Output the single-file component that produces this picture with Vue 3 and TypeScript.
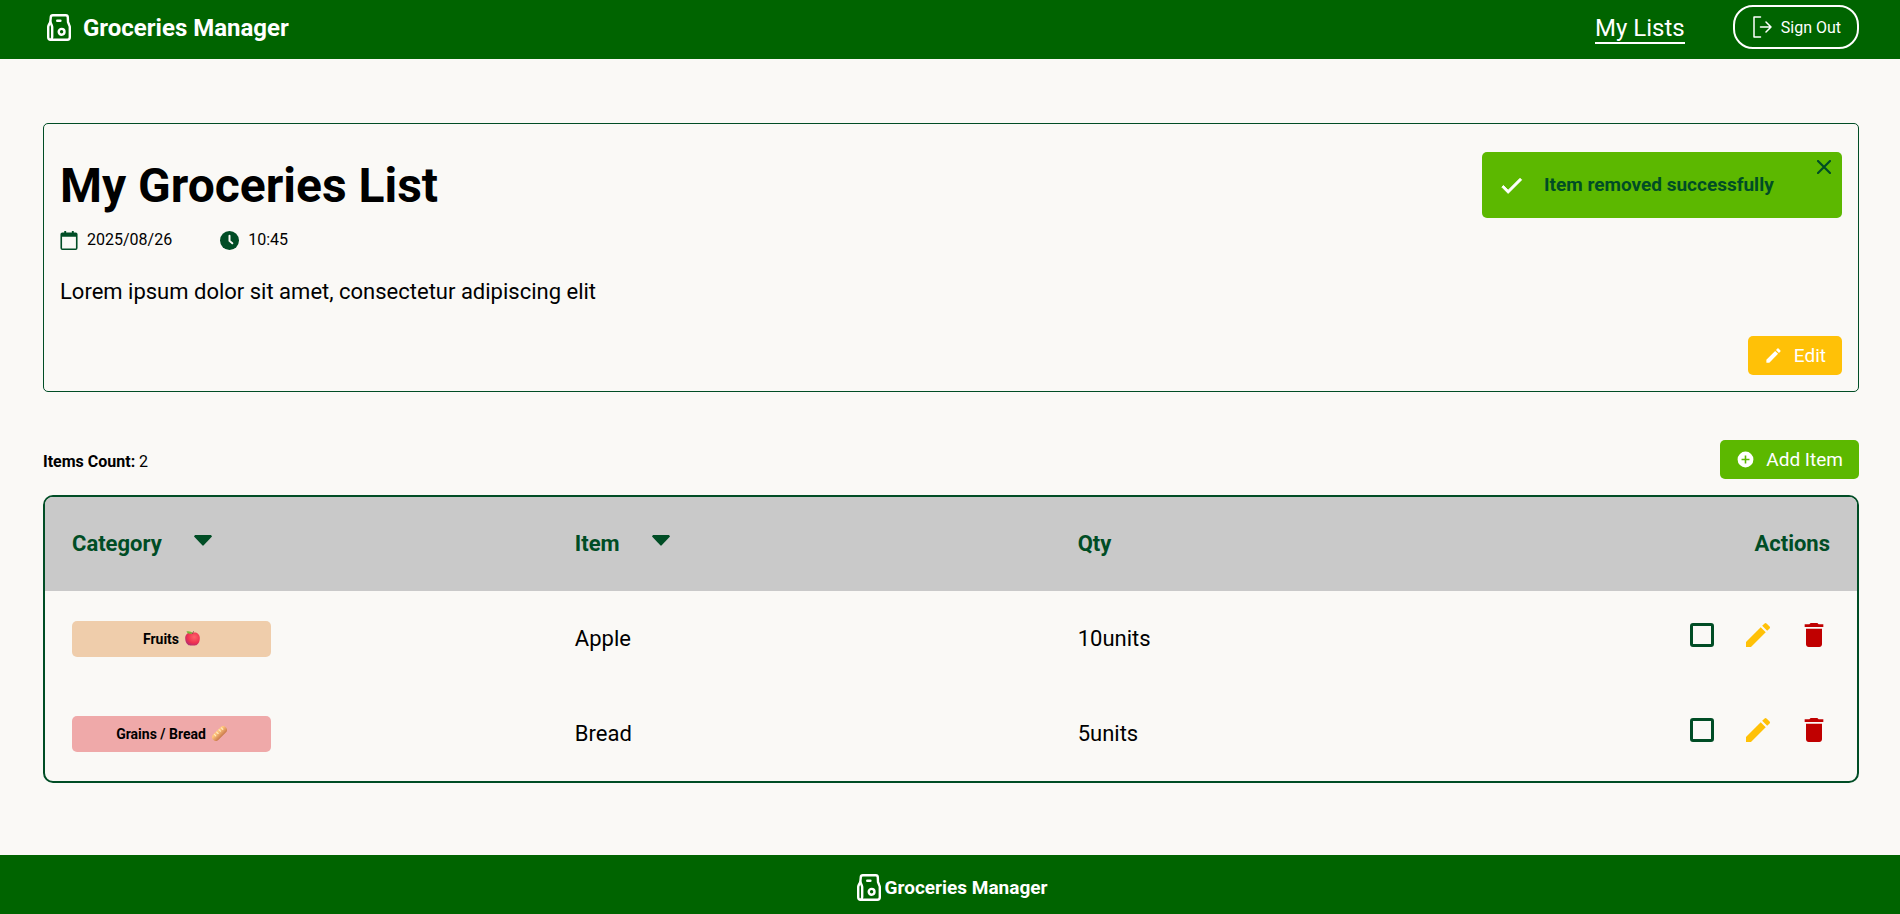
<script setup lang="ts">
import { ref } from 'vue'

interface GroceryItem {
  id: number
  category: string
  kind: 'fruits' | 'grains'
  name: string
  quantity: string
  done: boolean
}

const items = ref<GroceryItem[]>([
  { id: 1, category: 'Fruits', kind: 'fruits', name: 'Apple', quantity: '10units', done: false },
  { id: 2, category: 'Grains / Bread', kind: 'grains', name: 'Bread', quantity: '5units', done: false },
])

const toastVisible = ref(true)

function removeItem(id: number) {
  items.value = items.value.filter((item) => item.id !== id)
  toastVisible.value = true
}
</script>

<template>
  <div class="page">
    <header class="topbar">
      <a class="brand" href="#">
        <svg class="logo" viewBox="0 0 24 27" aria-hidden="true">
          <path d="M5.8 1.200h13a2 2 0 0 1 2 1.900L21 8l1.300 3.200c.3.6.5 1.200.5 1.900V23.300a2.500 2.500 0 0 1-2.500 2.500H3.700A2.500 2.500 0 0 1 1.200 23.300V13c0-.7.200-1.300.5-1.900L3.300 8l.5-4.900A2 2 0 0 1 5.800 1.200z" />
          <path d="M3.300 8l1.500 3.500c.2.500.4 1.100.4 1.700V23c0 1.700-.7 2.500-1.500 2.800" />
          <path d="M10.200 6.700h3.200" />
          <circle cx="14.600" cy="17.800" r="2.900" />
        </svg>
        <span class="brand-name">Groceries Manager</span>
      </a>
      <nav class="nav">
        <a class="nav-link" href="#">My Lists</a>
        <button class="sign-out" type="button">
          <svg viewBox="0 0 20 22" aria-hidden="true">
            <path d="M8.500 1H2v20h6.500" />
            <path d="M8.500 11h10.500M14 6l5 5-5 5" />
          </svg>
          Sign Out
        </button>
      </nav>
    </header>

    <main class="content">
      <section class="card">
        <h1>My Groceries List</h1>
        <div class="meta">
          <span class="meta-entry">
            <svg class="calendar" viewBox="0 0 18 20" aria-hidden="true">
              <path d="M2 1.500h2V0h2v1.500h6V0h2v1.500h2a2 2 0 0 1 2 2V18a2 2 0 0 1-2 2H2a2 2 0 0 1-2-2V3.500a2 2 0 0 1 2-2zM1.700 6v12.300h14.600V6z" fill-rule="evenodd" />
            </svg>
            2025/08/26
          </span>
          <span class="meta-entry">
            <svg class="clock" viewBox="0 0 19 19" aria-hidden="true">
              <circle cx="9.500" cy="9.500" r="9.500" />
              <path class="hand" d="M9.500 4.700v5.200l2.800 2.400" />
            </svg>
            10:45
          </span>
        </div>
        <p class="description">Lorem ipsum dolor sit amet, consectetur adipiscing elit</p>
        <div class="card-actions">
          <button class="btn btn-edit" type="button">
            <svg viewBox="0 0 24 24" aria-hidden="true">
              <path d="M3 17.250V21h3.750L17.810 9.940l-3.750-3.750L3 17.250zM20.710 7.040a1 1 0 0 0 0-1.410l-2.340-2.340a1 1 0 0 0-1.410 0l-1.830 1.830 3.750 3.750 1.830-1.830z" />
            </svg>
            Edit
          </button>
        </div>
        <div v-if="toastVisible" class="toast" role="status">
          <svg class="tick" viewBox="0 0 24 24" aria-hidden="true">
            <path d="M9 16.170 4.830 12l-1.420 1.410L9 19 21 7l-1.410-1.410z" />
          </svg>
          <span class="toast-text">Item removed successfully</span>
          <button class="close" type="button" aria-label="Close" @click="toastVisible = false">
            <svg viewBox="0 0 14 14" aria-hidden="true"><path d="M1 1l12 12M13 1L1 13" /></svg>
          </button>
        </div>
      </section>

      <div class="list-bar">
        <p class="count"><strong>Items Count:</strong> {{ items.length }}</p>
        <button class="btn btn-add" type="button">
          <svg viewBox="0 0 24 24" aria-hidden="true">
            <path d="M12 2a10 10 0 1 0 0 20 10 10 0 0 0 0-20zm5 11h-4v4h-2v-4H7v-2h4V7h2v4h4z" />
          </svg>
          Add Item
        </button>
      </div>

      <div class="table-frame">
        <table>
          <thead>
            <tr>
              <th class="col" scope="col">
                Category
                <button class="sort" type="button" aria-label="Sort by category">
                  <svg viewBox="0 0 18 11" aria-hidden="true"><path d="M1 0h16l1 1.500L9.700 10.300a1 1 0 0 1-1.400 0L0 1.500z" /></svg>
                </button>
              </th>
              <th class="col" scope="col">
                Item
                <button class="sort" type="button" aria-label="Sort by item">
                  <svg viewBox="0 0 18 11" aria-hidden="true"><path d="M1 0h16l1 1.500L9.700 10.300a1 1 0 0 1-1.400 0L0 1.500z" /></svg>
                </button>
              </th>
              <th class="col" scope="col">Qty</th>
              <th class="col-actions" scope="col">Actions</th>
            </tr>
          </thead>
          <tbody>
            <tr v-for="item in items" :key="item.id">
              <td>
                <span class="badge" :class="item.kind">
                  {{ item.category }}
                  <svg v-if="item.kind === 'fruits'" viewBox="0 0 32 32" aria-hidden="true">
                    <defs>
                      <radialGradient id="apple" cx=".62" cy=".35" r=".75">
                        <stop offset="0" stop-color="#ff6268" />
                        <stop offset=".6" stop-color="#ee3151" />
                        <stop offset="1" stop-color="#a62c76" />
                      </radialGradient>
                    </defs>
                    <path fill="url(#apple)" d="M16 4c4-1.500 9-1 12 2.500 3 3 4 6 3.500 10.500-.5 6-2.500 9.500-6 12.500-2.500 2-6 1.500-9.500 1.500s-7 .5-9.500-1.500C3 26.500 1 23 .5 17 0 12.500 1 9.500 4 6.500 7 3 12 2.500 16 4z" />
                    <path fill="#78b93b" d="M3 1c6-1 11 0 13 4.500C10 7 5 5.500 3 1z" />
                    <path fill="none" stroke="#7a5148" stroke-width="2" d="M16 6c0-2.500 1-4 3-5" />
                  </svg>
                  <svg v-else viewBox="0 0 32 32" aria-hidden="true">
                    <defs>
                      <linearGradient id="loaf" x1="0" y1="0" x2="0" y2="1">
                        <stop offset=".2" stop-color="#ffc47c" />
                        <stop offset="1" stop-color="#c9794c" />
                      </linearGradient>
                    </defs>
                    <rect x="-3" y="8" width="38" height="16" rx="8" fill="url(#loaf)" transform="rotate(-45 16 16)" />
                    <path fill="none" stroke="#ffe9bd" stroke-width="2.500" stroke-linecap="round" d="M5 18l3 3M10 13l3 3M15 8l3 3M20 4l3 3" />
                  </svg>
                </span>
              </td>
              <td>{{ item.name }}</td>
              <td>{{ item.quantity }}</td>
              <td>
                <div class="row-actions">
                  <input v-model="item.done" type="checkbox" :aria-label="`Mark ${item.name} as done`" />
                  <button class="icon-btn edit" type="button" :aria-label="`Edit ${item.name}`">
                    <svg viewBox="0 0 24 24" aria-hidden="true">
                      <path d="M3 17.250V21h3.750L17.810 9.940l-3.750-3.750L3 17.250zM20.710 7.040a1 1 0 0 0 0-1.410l-2.340-2.340a1 1 0 0 0-1.410 0l-1.830 1.830 3.750 3.750 1.830-1.830z" />
                    </svg>
                  </button>
                  <button class="icon-btn delete" type="button" :aria-label="`Delete ${item.name}`" @click="removeItem(item.id)">
                    <svg viewBox="0 0 24 24" aria-hidden="true">
                      <path d="M6 19c0 1.100.9 2 2 2h8c1.100 0 2-.9 2-2V7.400H6V19zM19 4h-3.500l-1-1h-5l-1 1H5v2h14V4z" />
                    </svg>
                  </button>
                </div>
              </td>
            </tr>
          </tbody>
        </table>
      </div>
    </main>

    <footer class="footer">
      <svg class="logo" viewBox="0 0 24 27" aria-hidden="true">
        <path d="M5.8 1.200h13a2 2 0 0 1 2 1.900L21 8l1.300 3.200c.3.6.5 1.200.5 1.900V23.300a2.500 2.500 0 0 1-2.500 2.500H3.700A2.500 2.500 0 0 1 1.200 23.300V13c0-.7.200-1.300.5-1.900L3.300 8l.5-4.900A2 2 0 0 1 5.800 1.200z" />
        <path d="M3.300 8l1.500 3.500c.2.500.4 1.100.4 1.700V23c0 1.700-.7 2.500-1.500 2.800" />
        <path d="M10.200 6.700h3.200" />
        <circle cx="14.600" cy="17.800" r="2.900" />
      </svg>
      <span>Groceries Manager</span>
    </footer>
  </div>
</template>

<style>
body {
  margin: 0;
  background: #faf9f6;
}
</style>

<style scoped>
.page {
  display: flex;
  flex-direction: column;
  min-height: 100vh;
  font-family: Roboto, 'Liberation Sans', sans-serif;
  font-size: 16px;
  color: #000;
  background: #faf9f6;
}

.page * {
  box-sizing: border-box;
}

svg {
  display: block;
  flex: none;
  fill: currentColor;
}

button {
  font: inherit;
  cursor: pointer;
}

.topbar {
  display: flex;
  align-items: center;
  justify-content: space-between;
  padding: 5px 41px 10px 47px;
  color: #fff;
  background: #006400;
}

.brand {
  display: flex;
  align-items: center;
  gap: 12px;
  font-size: 24px;
  font-weight: 700;
  color: inherit;
  text-decoration: none;
}

.brand-name {
  padding-top: 2px;
}

.logo {
  width: 24px;
  height: 27px;
  fill: none;
  stroke: currentColor;
  stroke-width: 2.4;
  stroke-linecap: round;
  stroke-linejoin: round;
}

.nav {
  display: flex;
  align-items: center;
  gap: 48px;
}

.nav-link {
  margin-top: 3px;
  font-size: 24px;
  line-height: 28px;
  color: inherit;
  text-decoration: none;
  border-bottom: 2px solid #fff;
}

.sign-out {
  display: flex;
  align-items: center;
  gap: 9px;
  height: 44px;
  padding: 0 16px 0 17px;
  color: inherit;
  background: transparent;
  border: 2px solid #fff;
  border-radius: 20px;
}

.sign-out svg {
  width: 20px;
  height: 22px;
  fill: none;
  stroke: currentColor;
  stroke-width: 1.5;
  stroke-linecap: round;
  stroke-linejoin: round;
}

.content {
  flex: 1;
  padding: 64px 41px 64px 43px;
}

.card {
  position: relative;
  padding: 34px 16px 16px;
  border: 1px solid #004d25;
  border-radius: 5px;
}

h1 {
  margin: 0;
  font-size: 48px;
  line-height: 56px;
}

.meta {
  display: flex;
  gap: 48px;
  margin-top: 14px;
}

.meta-entry {
  display: flex;
  align-items: center;
  gap: 9px;
  line-height: 24px;
}

.calendar {
  width: 18px;
  height: 19px;
  color: #004d25;
}

.clock {
  width: 19px;
  height: 19px;
  color: #004d25;
}

.hand {
  fill: none;
  stroke: #faf9f6;
  stroke-width: 2;
  stroke-linecap: round;
}

.description {
  margin: 24px 0 28px;
  font-size: 22px;
  line-height: 32px;
}

.card-actions {
  display: flex;
  justify-content: flex-end;
}

.btn {
  display: flex;
  align-items: center;
  gap: 11px;
  height: 39px;
  padding: 0 16px;
  font-size: 19px;
  color: #fff;
  border: 0;
  border-radius: 5px;
}

.btn svg {
  width: 19px;
  height: 19px;
}

.btn-edit {
  background: #ffc107;
}

.btn-add {
  background: #5cb800;
}

.toast {
  position: absolute;
  top: 28px;
  right: 16px;
  display: flex;
  align-items: center;
  gap: 19px;
  width: 360px;
  height: 66px;
  padding: 0 16px;
  font-size: 19px;
  font-weight: 700;
  color: #004d25;
  background: #5cb800;
  border-radius: 5px;
}

.toast-text {
  padding-bottom: 2px;
}

.tick {
  width: 27px;
  height: 27px;
  color: #fff;
  stroke: currentColor;
  stroke-width: 0.8;
}

.close {
  position: absolute;
  top: 8px;
  right: 11px;
  padding: 0;
  color: inherit;
  background: none;
  border: 0;
}

.close svg {
  width: 14px;
  height: 14px;
  stroke: currentColor;
  stroke-width: 2.2;
  stroke-linecap: round;
}

.list-bar {
  display: flex;
  align-items: center;
  justify-content: space-between;
  margin: 48px 0 16px;
}

.count {
  margin: 0;
  padding-top: 4px;
}

.table-frame {
  overflow: hidden;
  border: 2px solid #004d25;
  border-radius: 10px;
}

table {
  width: 100%;
  table-layout: fixed;
  border-collapse: collapse;
  font-size: 22px;
}

th,
td {
  height: 95px;
  padding: 0 27px;
  text-align: left;
}

th {
  height: 94px;
  padding-bottom: 2px;
  color: #004d25;
  background: #c9c9c9;
}

.col {
  width: 27.75%;
}

.col-actions {
  text-align: right;
}

.sort {
  margin-left: 27px;
  padding: 0;
  color: inherit;
  vertical-align: middle;
  background: none;
  border: 0;
}

.sort svg {
  width: 18px;
  height: 11px;
  margin-bottom: 8px;
}

.badge {
  display: flex;
  align-items: center;
  justify-content: center;
  gap: 6px;
  width: 199px;
  height: 36px;
  font-size: 14px;
  font-weight: 700;
  border-radius: 5px;
}

.badge svg {
  width: 15px;
  height: 15px;
}

.fruits {
  background: #efcdab;
}

.grains {
  background: #efa9a9;
}

.row-actions {
  display: flex;
  align-items: center;
  justify-content: flex-end;
  gap: 24px;
  padding-bottom: 8px;
}

.row-actions input {
  width: 24px;
  height: 24px;
  margin: 4px;
  appearance: none;
  border: 3px solid #004d25;
  border-radius: 3px;
}

.row-actions input:checked {
  background: #004d25;
}

.icon-btn {
  padding: 0;
  background: none;
  border: 0;
}

.icon-btn svg {
  width: 32px;
  height: 32px;
}

.edit {
  color: #ffc107;
}

.delete {
  color: #c00000;
}

.footer {
  display: flex;
  align-items: center;
  justify-content: center;
  gap: 4px;
  height: 59px;
  padding: 5px 0 0 4px;
  font-size: 19px;
  font-weight: 700;
  color: #fff;
  background: #006400;
}
</style>
